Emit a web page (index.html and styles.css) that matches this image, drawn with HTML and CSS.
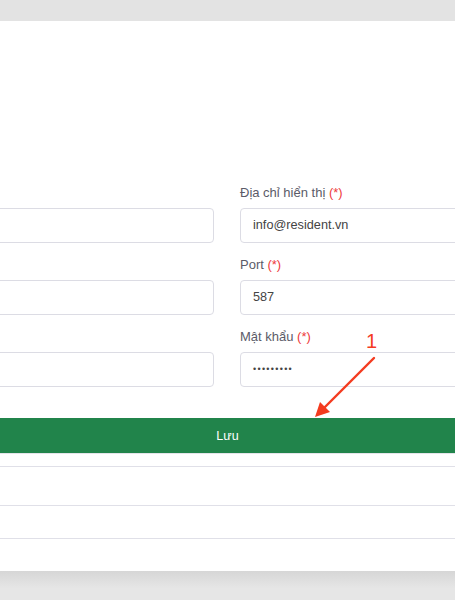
FILE: index.html
```html
<!DOCTYPE html>
<html lang="vi">
<head>
<meta charset="utf-8">
<link rel="stylesheet" href="styles.css">
</head>
<body>
<div class="topbar"></div>
<div class="panel">
  <div class="grid">
    <div class="field">
      <div class="label">&nbsp;</div>
      <div class="input"></div>
    </div>
    <div class="field">
      <div class="label">Địa chỉ hiển thị <span class="req">(*)</span></div>
      <div class="input">info@resident.vn</div>
    </div>
    <div class="field">
      <div class="label">&nbsp;</div>
      <div class="input"></div>
    </div>
    <div class="field">
      <div class="label">Port <span class="req">(*)</span></div>
      <div class="input">587</div>
    </div>
    <div class="field">
      <div class="label">&nbsp;</div>
      <div class="input"></div>
    </div>
    <div class="field">
      <div class="label">Mật khẩu <span class="req">(*)</span></div>
      <div class="input pw">•••••••••</div>
    </div>
  </div>
  <div class="btn">Lưu</div>
  <div class="rows">
    <div class="row r1"></div>
    <div class="row r2"></div>
    <div class="row r3"></div>
    <div class="row r4"></div>
  </div>
  <div class="annot">
    <span class="num">1</span>
    <svg class="arrow" width="80" height="80" viewBox="0 0 80 80">
      <line x1="74" y1="18" x2="22" y2="70" stroke="#f43b1f" stroke-width="2.4" stroke-linecap="round"/>
      <polygon points="15,77 20,62 30,72" fill="#f43b1f"/>
    </svg>
  </div>
</div>
<div class="footer"></div>
</body>
</html>
```
FILE: styles.css
```css
html, body {
  margin: 0;
  padding: 0;
}
body {
  width: 455px;
  height: 600px;
  overflow: hidden;
  background: #e5e5e5;
  font-family: "Liberation Sans", Arial, sans-serif;
}
.topbar {
  height: 21px;
  background: #e3e3e3;
}
.panel {
  position: relative;
  height: 550px;
  background: #ffffff;
  display: flex;
  flex-direction: column;
  padding-top: 163px;
  box-sizing: border-box;
}
.grid {
  display: grid;
  grid-template-columns: 240px 240px;
  column-gap: 26px;
  row-gap: 13px;
  margin-left: -26px;
}
.label {
  height: 18px;
  line-height: 18px;
  font-size: 13px;
  color: #5b5b68;
  margin-bottom: 6px;
  white-space: nowrap;
}
.req {
  color: #ee3b3b;
}
.input {
  height: 35px;
  box-sizing: border-box;
  border: 1px solid #dcdce4;
  border-radius: 4px;
  padding: 0 12px;
  line-height: 33px;
  font-size: 12.7px;
  color: #444;
}
.input.pw {
  font-size: 9px;
  letter-spacing: 1.3px;
}
.btn {
  margin-top: 31px;
  height: 35px;
  line-height: 36px;
  background: #21844b;
  color: #ffffff;
  font-size: 12.5px;
  text-align: center;
  border-bottom: 1px solid #e4e4ea;
}
.rows {
  display: flex;
  flex-direction: column;
}
.row {
  border-bottom: 1px solid #e0e0e8;
}
.r1 { height: 12px; }
.r2 { height: 38px; }
.r3 { height: 32px; }
.r4 { height: 32px; border-bottom: none; }
.annot {
  position: absolute;
  left: 300px;
  top: 291px;
  width: 90px;
  height: 90px;
}
.num {
  position: absolute;
  left: 66px;
  top: 17px;
  font-size: 20px;
  line-height: 24px;
  color: #f43b1f;
}
.arrow {
  position: absolute;
  left: 0;
  top: 28px;
}
.footer {
  height: 29px;
  background: linear-gradient(#d6d6d6, #e6e6e6 60%);
}
```
